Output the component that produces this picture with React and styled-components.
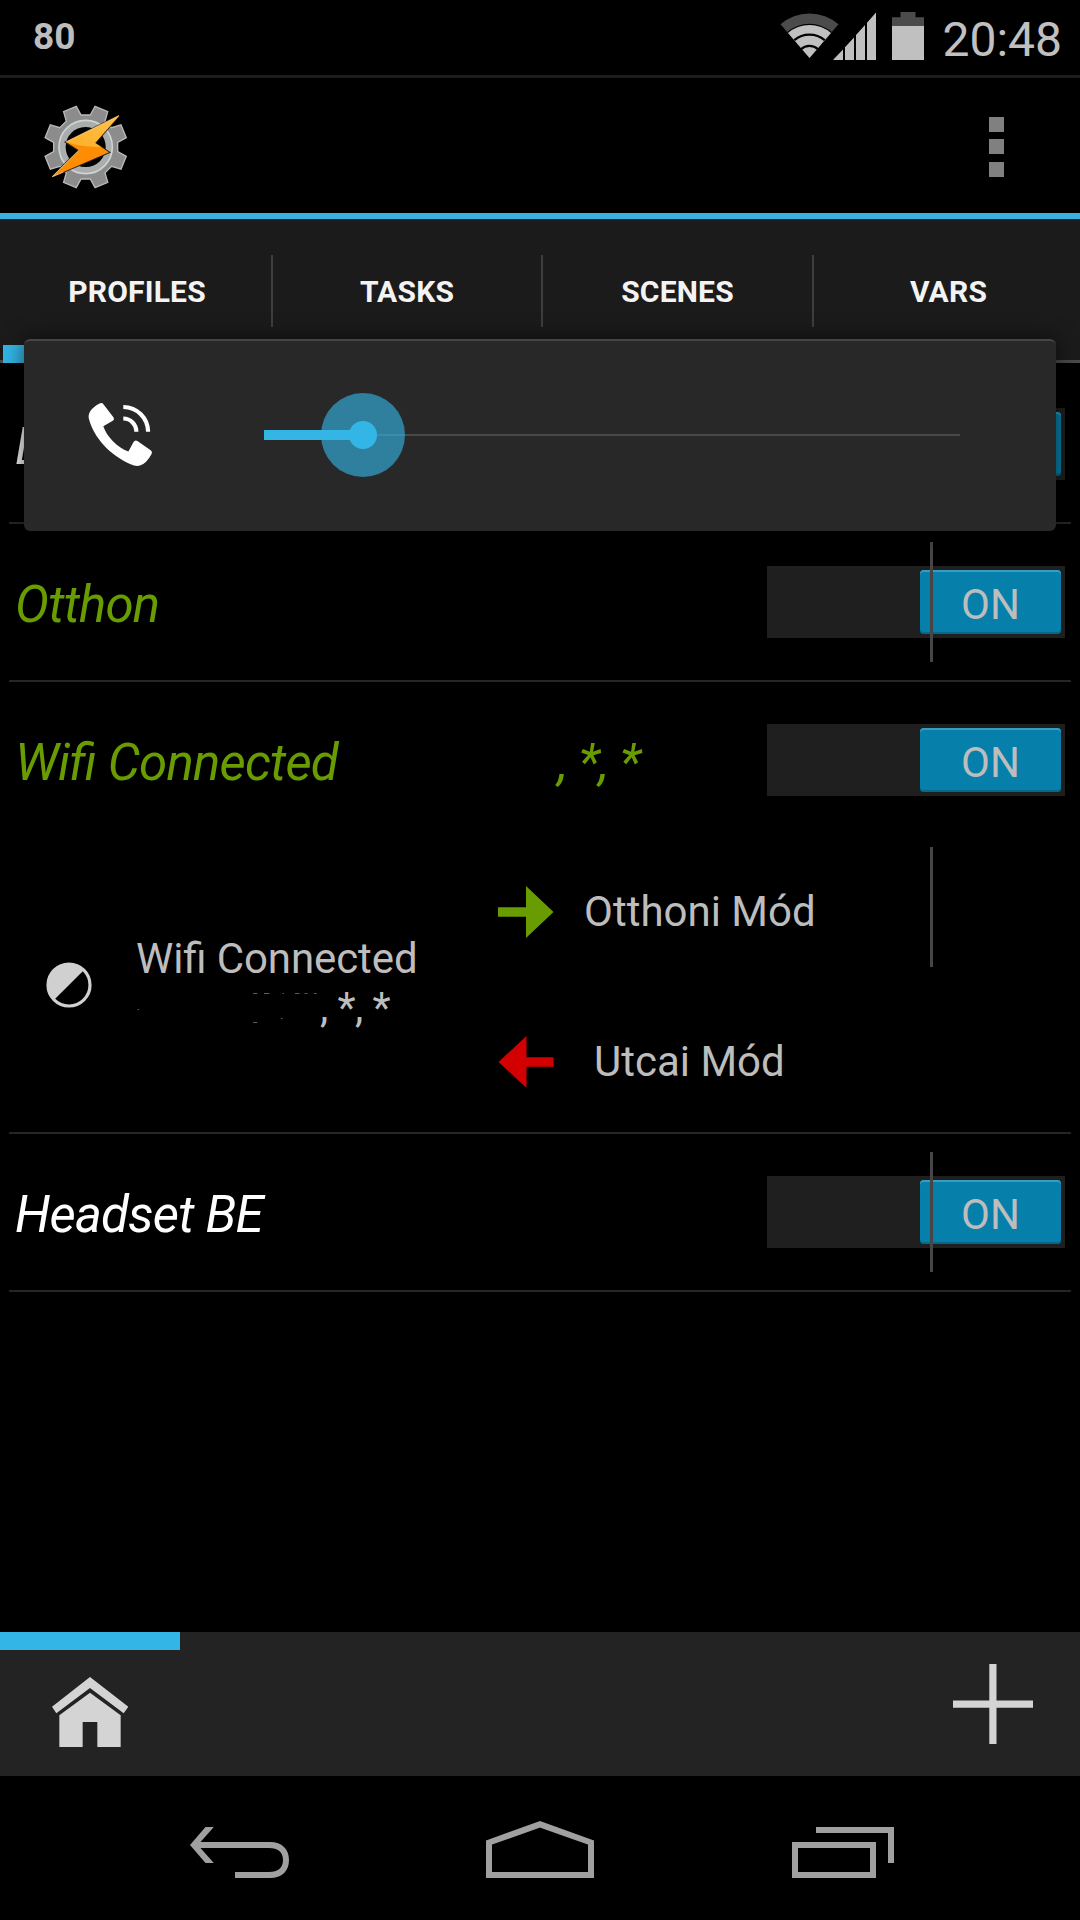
import styled, { createGlobalStyle } from 'styled-components';

const profiles = [
  { name: 'L', color: '#f4f4f4', line: true },
  { name: 'Otthon', color: '#699c00', line: true },
  { name: 'Wifi Connected', suffix: ', *, *', color: '#699c00', open: true },
  { name: 'Headset BE', color: '#ffffff', line: true },
];

export default function App() {
  return (
    <>
      <GlobalStyle />
      <Screen>
        <StatusBar>
          <BatteryPercent>80</BatteryPercent>
          <StatusIcons />
          <Clock>20:48</Clock>
        </StatusBar>
        <ActionBar>
          <TaskerLogo />
          <OverflowButton>
            <Dot /><Dot /><Dot />
          </OverflowButton>
        </ActionBar>
        <Tabs>
          <Tab $active>PROFILES</Tab>
          <Tab>TASKS</Tab>
          <Tab>SCENES</Tab>
          <Tab>VARS</Tab>
        </Tabs>
        <ProfileList>
          {profiles.map((profile) => <Profile key={profile.name} {...profile} />)}
        </ProfileList>
        <ProjectBar>
          <ProjectTab><HomeIcon /></ProjectTab>
          <AddButton><PlusIcon /></AddButton>
        </ProjectBar>
        <NavBar>
          <BackIcon />
          <NavHomeIcon />
          <RecentsIcon />
        </NavBar>
        <VolumePanel>
          <PhoneIcon />
          <Slider>
            <SliderFill />
            <SliderThumb />
          </Slider>
        </VolumePanel>
      </Screen>
    </>
  );
}

function Profile({ name, suffix, color, line, open }) {
  return (
    <ProfileItem>
      <ProfileHeader>
        <ProfileName $color={color}>{name}</ProfileName>
        {suffix && <ProfileSuffix $color={color}>{suffix}</ProfileSuffix>}
        <Switch>
          <SwitchThumb>ON</SwitchThumb>
        </Switch>
        {line && <HeaderLine />}
      </ProfileHeader>
      {open && (
        <ProfileDetail>
          <ContrastIcon />
          <Context>
            <ContextLine $spacing={-0.1}>Wifi Connected</ContextLine>
            <ContextLine $spacing={-0.6}>
              <ErasedName />
              , *, *
            </ContextLine>
          </Context>
          <TaskLinks>
            <TaskLink>
              <EnterArrow />
              <TaskName $gap={30}>Otthoni Mód</TaskName>
            </TaskLink>
            <TaskLink>
              <ExitArrow />
              <TaskName $gap={40}>Utcai Mód</TaskName>
            </TaskLink>
          </TaskLinks>
          <DetailLine />
        </ProfileDetail>
      )}
    </ProfileItem>
  );
}

function StatusIcons() {
  return (
    <svg width="146" height="50" viewBox="780 12 146 50">
      <path d="M809.5 58 L780.5 24.3 A44 44 0 0 1 838.5 24.3 Z" fill="#4b4b4b" />
      <path d="M809.5 58 L787.2 32 A34.5 34.5 0 0 1 831.8 32 Z" fill="#000" />
      <path d="M809.5 58 L788 33 A33 33 0 0 1 831 33 Z" fill="#c0c0c0" />
      <path d="M794.3 40.2 A23.3 23.3 0 0 1 824.7 40.2" fill="none" stroke="#000" strokeWidth="2.2" />
      <path d="M801 49.2 A12.6 12.6 0 0 1 818 49.2" fill="none" stroke="#000" strokeWidth="2.2" />
      <path d="M833 60 L843 49.5 V60 Z M845 60 V47.3 L854 37.4 V60 Z M856 60 V35 L865 25 V60 Z M867 60 V22.8 L876 12.5 V60 Z" fill="#c0c0c0" />
      <path d="M900.5 12 H915.5 V17.3 H924 V26 H892 V17.3 H900.5 Z" fill="#4b4b4b" />
      <path d="M892 26 H924 V60 H892 Z" fill="#c0c0c0" />
    </svg>
  );
}

// eight teeth, the first one 22.5 degrees off the vertical
const gearPoints = Array.from({ length: 8 }, (_, i) => {
  const middle = 22.5 + i * 45;
  return [[-14.3, 97], [-9.5, 125], [9.5, 125], [14.3, 97]].map(([offset, radius]) => {
    const angle = ((middle + offset) * Math.PI) / 180;
    return `${257 + radius * Math.sin(angle)},${440 - radius * Math.cos(angle)}`;
  }).join(' ');
}).join(' ');

function TaskerLogo() {
  return (
    <svg width="84" height="84" viewBox="132 314 252 252">
      <defs>
        <linearGradient id="boltTop" x1="1" y1="0" x2="0" y2="1">
          <stop offset="0" stopColor="#ffc24a" />
          <stop offset="1" stopColor="#fdae28" />
        </linearGradient>
        <mask id="gearHole">
          <rect x="132" y="314" width="252" height="252" fill="#fff" />
          <circle cx="257" cy="440" r="60" fill="#000" />
        </mask>
      </defs>
      <g mask="url(#gearHole)">
        <polygon points={gearPoints} fill="#8c8c8c" stroke="#b9b9b9" strokeWidth="4" />
        <circle cx="257" cy="440" r="71" fill="none" stroke="#aaadad" strokeWidth="22" />
        <circle cx="257" cy="440" r="80" fill="none" stroke="#cfd2d2" strokeWidth="5" />
      </g>
      <path d="M357 346 L285 428 L327 456 L157 529 L237 450 L198 425 Z" fill="#ff8c05" stroke="#2c2415" strokeWidth="6" />
      <path d="M357 346 L285 428 L327 456 L157 529 L237 450 L198 425 Z" fill="#ff8c05" />
      <path d="M357 346 L285 428 L303 440 Q262 442 222 432 L198 425 Z" fill="url(#boltTop)" />
      <path d="M357 346 L198 425 M237 450 L157 529 L190 515" fill="none" stroke="#f6cf8d" strokeWidth="2.5" />
    </svg>
  );
}

function PhoneIcon() {
  return (
    <svg width="72" height="72" viewBox="0 0 72 72">
      <path
        d="M15.5 4.6 Q18 3.2 19.6 5.4 L29.6 18.4 Q30.8 20.5 28.8 21.8 L19.3 27.3 C23 38 33 48.5 44.4 52.5 L49.4 43.2 Q51 40.7 53.4 42 L67 51.6 Q68.6 53 67.6 55 Q62.5 64.5 56 66.6 Q52 67.8 46 65 C26 56 9.5 38.5 4.8 19.5 C3.7 13.5 8 8.8 15.5 4.6 Z"
        fill="#fff"
      />
      <path d="M39.3 8 A24.8 24.8 0 0 1 64.1 32.8 M39.3 19.5 A13 13 0 0 1 52.3 32.8" fill="none" stroke="#fff" strokeWidth="4.2" />
    </svg>
  );
}

function ContrastIcon() {
  return (
    <svg width="46" height="46" viewBox="0 0 46 46">
      <circle cx="23" cy="23" r="21" fill="#000" stroke="#d0d0d0" strokeWidth="3.2" />
      <path d="M38.3 7.7 A21.6 21.6 0 1 0 7.7 38.3 Z" fill="#d0d0d0" />
    </svg>
  );
}

function ErasedName() {
  return (
    <ErasedSvg width="183" height="34" viewBox="137 990 183 34">
      <path
        d="M138.5 1008.5 h1.6 M254 992.5 h4.5 M265 992.5 h5.5 M283.5 992.5 h1.5 M296 992.5 h4.5 M305.5 992.5 h3 M315 992.5 h2.5 M254 1021.5 h4.5 M282 1017.5 h1.5"
        stroke="#5a5a5a"
        strokeWidth="1"
      />
    </ErasedSvg>
  );
}

function EnterArrow() {
  return (
    <svg width="57" height="52" viewBox="-1 0 57 52">
      <path d="M0 21.2 H28 V0 L55.5 26 L28 52 V30.8 H0 Z" fill="#699c00" />
    </svg>
  );
}

function ExitArrow() {
  return (
    <svg width="57" height="52" viewBox="0 0 57 52">
      <path d="M56.5 21.2 H29.5 V0 L1.5 26 L29.5 52 V30.8 H56.5 Z" fill="#d20000" />
    </svg>
  );
}

function HomeIcon() {
  return (
    <svg width="76" height="70" viewBox="156 231 228 210">
      <path d="M270 231 L385 320 L371 340 L270 264 L169 340 L156 320 Z" fill="#d4d4d4" />
      <path d="M270 278 L362 346 V441 H292 V366 H248 V441 H178 V346 Z" fill="#d4d4d4" />
    </svg>
  );
}

function PlusIcon() {
  return (
    <svg width="80" height="80" viewBox="0 0 80 80">
      <path d="M36.3 0 H43.5 V36.5 H80 V43.7 H43.5 V80 H36.3 V43.7 H0 V36.5 H36.3 Z" fill="#d4d4d4" />
    </svg>
  );
}

function BackIcon() {
  return (
    <svg width="99" height="51" viewBox="190 1827 99 51">
      <path d="M205.5 1827 H213.8 L200.5 1842 H270 C282 1842 289 1849 289 1860 C289 1871 282 1878 270 1878 H235 V1872 H269 C278 1872 283 1868 283 1860 C283 1852 278 1848 269 1848 H200.5 L213.8 1863 H205.5 L190 1845 Z" fill="#a0a0a0" />
    </svg>
  );
}

function NavHomeIcon() {
  return (
    <svg width="109" height="57" viewBox="0 0 109 57">
      <path d="M3 54 V21.5 L54 3.3 L105 21.5 V54 Z" fill="none" stroke="#a0a0a0" strokeWidth="6" />
    </svg>
  );
}

function RecentsIcon() {
  return (
    <svg width="102" height="51" viewBox="0 0 102 51">
      <path d="M3 18 H81 V48 H3 Z M24 3 H99 V36" fill="none" stroke="#a0a0a0" strokeWidth="6" />
    </svg>
  );
}

const GlobalStyle = createGlobalStyle`
  body {
    margin: 0;
    background: #000;
  }
  * {
    box-sizing: border-box;
  }
  svg {
    display: block;
    flex: none;
  }
`;

const Screen = styled.div`
  position: relative;
  display: flex;
  flex-direction: column;
  width: 1080px;
  height: 1920px;
  overflow: hidden;
  background: #000;
  color: #bdbdbd;
  font-family: Roboto, sans-serif;
`;

const StatusBar = styled.header`
  display: flex;
  align-items: flex-start;
  height: 78px;
  padding: 12px 18px 0 33px;
  border-bottom: 3px solid #1c1c1c;
`;

const BatteryPercent = styled.span`
  margin-top: 4px;
  margin-right: auto;
  font-size: 37px;
  font-weight: 700;
  line-height: 42px;
`;

const Clock = styled.span`
  margin-left: 16px;
  font-size: 48px;
  line-height: 56px;
  color: #c0c0c0;
`;

const ActionBar = styled.div`
  display: flex;
  align-items: center;
  justify-content: space-between;
  height: 141px;
  padding: 2px 76px 0 44px;
  border-bottom: 6px solid #3cb1e1;
`;

const OverflowButton = styled.div`
  display: flex;
  flex-direction: column;
  gap: 7.5px;
`;

const Dot = styled.span`
  width: 15px;
  height: 15px;
  background: #808080;
`;

const Tabs = styled.nav`
  display: grid;
  grid-template-columns: 268px 270px 271px 268px;
  height: 144px;
  padding-left: 3px;
  background: linear-gradient(#16262c 0, #1b1b1b 3px);
  border-bottom: 3px solid #4a4a4a;
`;

const Tab = styled.div`
  display: flex;
  align-items: center;
  justify-content: center;
  height: 144px;
  padding-top: 18px;
  border-bottom: 18px solid ${({ $active }) => ($active ? '#33b5e5' : 'transparent')};
  font-size: 30px;
  font-weight: 700;
  letter-spacing: 0.2px;
  color: #f3f3f3;

  & + & {
    padding-left: 2px;
    background: linear-gradient(#3e3e3e, #3e3e3e) no-repeat 0 36px / 2px 72px;
  }

  &:last-child {
    padding-left: 5px;
  }
`;

const ProfileList = styled.main`
  flex: 1;
  padding: 3px 9px 0;
`;

const ProfileItem = styled.section`
  border-bottom: 2px solid #262626;
`;

const ProfileHeader = styled.div`
  position: relative;
  display: flex;
  align-items: center;
  height: 156px;
  padding: 0 6px;
`;

const ProfileName = styled.span`
  padding-top: 5px;
  font-size: 51px;
  font-style: italic;
  letter-spacing: -0.8px;
  font-feature-settings: 'liga' 1;
  white-space: pre;
  color: ${({ $color }) => $color};
`;

const ProfileSuffix = styled(ProfileName)`
  margin-left: 220px;
`;

const Switch = styled.div`
  display: flex;
  justify-content: flex-end;
  width: 298px;
  height: 72px;
  margin-left: auto;
  padding: 4px;
  background: #1f1f1f;
`;

const SwitchThumb = styled.div`
  display: flex;
  align-items: center;
  justify-content: center;
  width: 141px;
  padding-top: 4px;
  border-radius: 4px;
  background: #0680aa;
  box-shadow: inset 0 2px 0 #3a9dbd, inset 0 -2px 0 #056789;
  font-size: 42px;
`;

const DetailLine = styled.span`
  align-self: flex-start;
  width: 3px;
  height: 120px;
  margin-top: 9px;
  background: #464646;
`;

const HeaderLine = styled(DetailLine)`
  position: absolute;
  top: 18px;
  left: 921px;
  margin: 0;
`;

const ProfileDetail = styled.div`
  display: flex;
  align-items: center;
  height: 294px;
  padding-left: 37px;
`;

const Context = styled.div`
  width: 361px;
  margin-top: -4px;
  margin-left: 44px;
`;

const ContextLine = styled.div`
  display: flex;
  align-items: center;
  height: 49px;
  font-size: 42px;
  letter-spacing: ${({ $spacing }) => $spacing}px;
  font-feature-settings: 'liga' 1;
`;

const ErasedSvg = styled.svg`
  margin-right: 1px;
`;

const TaskLinks = styled.div`
  display: flex;
  flex-direction: column;
  align-self: flex-start;
  gap: 78px;
  width: 433px;
  padding-top: 38px;
`;

const TaskLink = styled.div`
  display: flex;
  align-items: center;
  height: 72px;
`;

const TaskName = styled.span`
  margin-left: ${({ $gap }) => $gap}px;
  padding-bottom: 2px;
  font-size: 42px;
`;

const ProjectBar = styled.footer`
  display: flex;
  align-items: flex-start;
  justify-content: space-between;
  height: 144px;
  background: #232323;
`;

const ProjectTab = styled.div`
  display: flex;
  justify-content: center;
  width: 180px;
  padding-top: 27px;
  border-top: 18px solid #33b5e5;
`;

const AddButton = styled.div`
  padding: 32px 47px 0 0;
`;

const NavBar = styled.nav`
  display: flex;
  align-items: flex-end;
  justify-content: space-between;
  height: 144px;
  padding: 0 186px 42px 190px;
`;

const VolumePanel = styled.div`
  position: absolute;
  top: 339px;
  left: 24px;
  display: flex;
  align-items: center;
  width: 1032px;
  height: 192px;
  padding: 0 0 2px 60px;
  border-top: 2px solid #464646;
  border-radius: 6px;
  background: #282828;
  box-shadow: 0 0 22px rgba(0, 0, 0, 0.6);
`;

const Slider = styled.div`
  display: flex;
  align-items: center;
  width: 696px;
  height: 84px;
  margin-left: 108px;
  background: linear-gradient(#494949, #494949) no-repeat 0 41px / 100% 2px;
`;

const SliderFill = styled.div`
  width: 99px;
  height: 10px;
  background: #33b5e5;
`;

const SliderThumb = styled.div`
  width: 84px;
  height: 84px;
  margin-left: -42px;
  border-radius: 50%;
  background: radial-gradient(circle, #33b5e5 13.5px, rgba(51, 181, 229, 0.62) 14.5px);
`;
